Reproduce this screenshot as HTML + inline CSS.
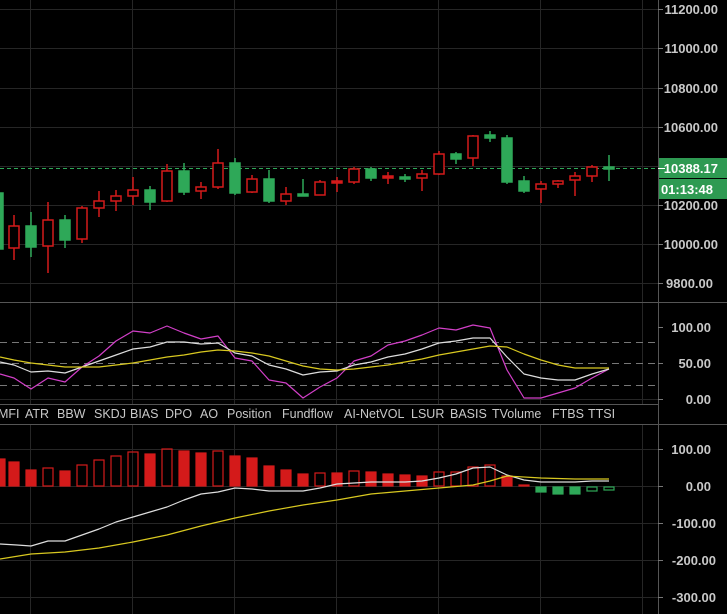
<!DOCTYPE html>
<html><head><meta charset="utf-8"><style>
html,body{margin:0;padding:0;background:#000;width:727px;height:614px;overflow:hidden}
svg{display:block}
text{font-family:"Liberation Sans",sans-serif}
</style></head><body>
<svg width="727" height="614" viewBox="0 0 727 614" xmlns="http://www.w3.org/2000/svg">
<rect width="727" height="614" fill="#000"/>
<g stroke="#262626" stroke-width="1">
<line x1="30.5" y1="0" x2="30.5" y2="614"/><line x1="132.5" y1="0" x2="132.5" y2="614"/><line x1="234.5" y1="0" x2="234.5" y2="614"/><line x1="336.5" y1="0" x2="336.5" y2="614"/><line x1="438.5" y1="0" x2="438.5" y2="614"/><line x1="540.5" y1="0" x2="540.5" y2="614"/><line x1="642.5" y1="0" x2="642.5" y2="614"/>
<line x1="0" y1="9.5" x2="658" y2="9.5"/><line x1="0" y1="48.5" x2="658" y2="48.5"/><line x1="0" y1="88.5" x2="658" y2="88.5"/><line x1="0" y1="127.5" x2="658" y2="127.5"/><line x1="0" y1="166.5" x2="658" y2="166.5"/><line x1="0" y1="205.5" x2="658" y2="205.5"/><line x1="0" y1="244.5" x2="658" y2="244.5"/><line x1="0" y1="283.5" x2="658" y2="283.5"/>
<line x1="0" y1="399.5" x2="658" y2="399.5"/>
<line x1="0" y1="449.5" x2="658" y2="449.5"/><line x1="0" y1="486.5" x2="658" y2="486.5"/><line x1="0" y1="523.5" x2="658" y2="523.5"/><line x1="0" y1="560.5" x2="658" y2="560.5"/><line x1="0" y1="597.5" x2="658" y2="597.5"/>
</g>
<rect x="0" y="405" width="658" height="19" fill="#000"/>
<g stroke="#777" stroke-width="1" stroke-dasharray="7,5">
<line x1="0" y1="342.5" x2="658" y2="342.5"/><line x1="0" y1="363.5" x2="658" y2="363.5"/><line x1="0" y1="385.5" x2="658" y2="385.5"/>
</g>
<g stroke="#555" stroke-width="1">
<line x1="0" y1="302.5" x2="727" y2="302.5"/><line x1="0" y1="424.5" x2="727" y2="424.5"/><line x1="0" y1="404.5" x2="658" y2="404.5"/><line x1="658.5" y1="0" x2="658.5" y2="614"/>
</g>
<line x1="0" y1="168.5" x2="658" y2="168.5" stroke="#2ea858" stroke-dasharray="4,3"/>
<!-- candles -->
<g stroke-width="1.5">
<g stroke="#2ea858" fill="#2ea858">
<rect x="-5" y="193" width="8" height="56"/>
<line x1="31" y1="212" x2="31" y2="257"/><rect x="26" y="226" width="10" height="21"/>
<line x1="65" y1="215" x2="65" y2="248"/><rect x="60" y="220" width="10" height="20"/>
<line x1="150" y1="186" x2="150" y2="210"/><rect x="145" y="190" width="10" height="12"/>
<line x1="184" y1="163" x2="184" y2="195"/><rect x="179" y="171" width="10" height="21"/>
<line x1="235" y1="158" x2="235" y2="195"/><rect x="230" y="163" width="10" height="30"/>
<line x1="269" y1="170" x2="269" y2="203"/><rect x="264" y="179" width="10" height="22"/>
<line x1="303" y1="179" x2="303" y2="196"/><rect x="298" y="194" width="10" height="2"/>
<line x1="371" y1="167" x2="371" y2="181"/><rect x="366" y="169" width="10" height="9"/>
<line x1="405" y1="174" x2="405" y2="182"/><rect x="400" y="177" width="10" height="2"/>
<line x1="456" y1="152" x2="456" y2="164"/><rect x="451" y="154" width="10" height="5"/>
<line x1="490" y1="131" x2="490" y2="142"/><rect x="485" y="135" width="10" height="3"/>
<line x1="507" y1="135" x2="507" y2="184"/><rect x="502" y="138" width="10" height="44"/>
<line x1="524" y1="176" x2="524" y2="193"/><rect x="519" y="181" width="10" height="10"/>
<line x1="609" y1="155" x2="609" y2="181"/><rect x="604" y="167" width="10" height="2"/>
</g>
<g stroke="#d41a1a" fill="none">
<line x1="14" y1="215" x2="14" y2="260"/><rect x="9" y="226" width="10" height="22" fill="#000"/>
<line x1="48" y1="202" x2="48" y2="273"/><rect x="43" y="220" width="10" height="26" fill="#000"/>
<line x1="82" y1="206" x2="82" y2="243"/><rect x="77" y="208" width="10" height="31" fill="#000"/>
<line x1="99" y1="191" x2="99" y2="217"/><rect x="94" y="201" width="10" height="7" fill="#000"/>
<line x1="116" y1="190" x2="116" y2="211"/><rect x="111" y="196" width="10" height="5" fill="#000"/>
<line x1="133" y1="177" x2="133" y2="205"/><rect x="128" y="190" width="10" height="6" fill="#000"/>
<line x1="167" y1="164" x2="167" y2="202"/><rect x="162" y="171" width="10" height="30" fill="#000"/>
<line x1="201" y1="182" x2="201" y2="199"/><rect x="196" y="187" width="10" height="4" fill="#000"/>
<line x1="218" y1="149" x2="218" y2="189"/><rect x="213" y="163" width="10" height="24" fill="#000"/>
<line x1="252" y1="175" x2="252" y2="193"/><rect x="247" y="179" width="10" height="13" fill="#000"/>
<line x1="286" y1="187" x2="286" y2="205"/><rect x="281" y="194" width="10" height="7" fill="#000"/>
<line x1="320" y1="180" x2="320" y2="195"/><rect x="315" y="182" width="10" height="13" fill="#000"/>
<line x1="337" y1="177" x2="337" y2="192"/><rect x="332" y="181" width="10" height="2" fill="#d41a1a"/>
<line x1="354" y1="167" x2="354" y2="184"/><rect x="349" y="169" width="10" height="13" fill="#000"/>
<line x1="388" y1="172" x2="388" y2="184"/><rect x="383" y="176" width="10" height="2" fill="#d41a1a"/>
<line x1="422" y1="170" x2="422" y2="191"/><rect x="417" y="174" width="10" height="4" fill="#000"/>
<line x1="439" y1="151" x2="439" y2="175"/><rect x="434" y="154" width="10" height="20" fill="#000"/>
<line x1="473" y1="135" x2="473" y2="166"/><rect x="468" y="136" width="10" height="22" fill="#000"/>
<line x1="541" y1="181" x2="541" y2="203"/><rect x="536" y="184" width="10" height="5" fill="#000"/>
<line x1="558" y1="180" x2="558" y2="188"/><rect x="553" y="181" width="10" height="3" fill="#000"/>
<line x1="575" y1="172" x2="575" y2="196"/><rect x="570" y="176" width="10" height="4" fill="#000"/>
<line x1="592" y1="165" x2="592" y2="182"/><rect x="587" y="167" width="10" height="9" fill="#000"/>
</g>
</g>
<!-- oscillator -->
<g fill="none" stroke-width="1.2" stroke-linejoin="round">
<polyline stroke="#d23fc8" points="0,374 14,378 31,389 48,378 65,382 82,367 99,356 116,341 133,331 150,333 167,326 184,333 201,339 218,336 235,358 252,361 269,380 286,383 303,398 320,387 337,378 354,361 371,356 388,345 405,341 422,335 439,328 456,330 473,325 490,328 507,370 524,398 541,398 558,393 575,388 592,378 609,369"/>
<polyline stroke="#ddd" points="0,362 14,365 31,372 48,371 65,373 82,367 99,361 116,355 133,349 150,347 167,342 184,342 201,344 218,343 235,353 252,356 269,365 286,369 303,375 320,372 337,371 354,365 371,362 388,357 405,354 422,349 439,343 456,341 473,338 490,338 507,357 524,374 541,378 558,380 575,380 592,374 609,369"/>
<polyline stroke="#d8c820" points="0,357 14,360 31,363 48,365 65,367 82,367 99,367 116,365 133,363 150,360 167,357 184,355 201,352 218,350 235,351 252,353 269,356 286,361 303,366 320,369 337,370 354,369 371,367 388,365 405,362 422,359 439,355 456,352 473,349 490,346 507,347 524,354 541,360 558,365 575,368 592,368 609,368"/>
</g>
<!-- macd bars -->
<g stroke="#d41a1a" stroke-width="1.2">
<g fill="#d41a1a">
<rect x="-5" y="459" width="10" height="27"/><rect x="9" y="462" width="10" height="24"/><rect x="26" y="470" width="10" height="16"/><rect x="60" y="471" width="10" height="15"/>
<rect x="145" y="454" width="10" height="32"/><rect x="179" y="451" width="10" height="35"/><rect x="196" y="453" width="10" height="33"/>
<rect x="230" y="456" width="10" height="30"/><rect x="247" y="458" width="10" height="28"/><rect x="264" y="466" width="10" height="20"/><rect x="281" y="470" width="10" height="16"/><rect x="298" y="474" width="10" height="12"/>
<rect x="332" y="473" width="10" height="13"/><rect x="366" y="472" width="10" height="14"/><rect x="383" y="474" width="10" height="12"/><rect x="400" y="475" width="10" height="11"/><rect x="417" y="476" width="10" height="10"/>
<rect x="502" y="476" width="10" height="10"/><rect x="519" y="485" width="10" height="1"/>
</g>
<g fill="none">
<rect x="43" y="468" width="10" height="18"/><rect x="77" y="465" width="10" height="21"/><rect x="94" y="460" width="10" height="26"/><rect x="111" y="456" width="10" height="30"/><rect x="128" y="452" width="10" height="34"/><rect x="162" y="449" width="10" height="37"/><rect x="213" y="451" width="10" height="35"/>
<rect x="315" y="473" width="10" height="13"/><rect x="349" y="471" width="10" height="15"/><rect x="434" y="472" width="10" height="14"/><rect x="451" y="472" width="10" height="14"/><rect x="468" y="467" width="10" height="19"/><rect x="485" y="465" width="10" height="21"/>
</g>
</g>
<g fill="#2ea858" stroke="#2ea858" stroke-width="1.2">
<rect x="536" y="487" width="10" height="5"/><rect x="553" y="487" width="10" height="7"/><rect x="570" y="487" width="10" height="7"/>
<rect x="587" y="487" width="10" height="4" fill="none"/><rect x="604" y="487" width="10" height="3" fill="none"/>
</g>
<g fill="none" stroke-width="1.2" stroke-linejoin="round">
<polyline stroke="#ddd" points="0,544 17,545 31,546 48,541 65,541 82,535 99,529 116,522 133,517 150,512 167,507 184,500 201,494 218,492 235,488 252,489 269,491 286,491 303,491 320,488 337,484 354,483 371,482 388,482 405,482 422,481 439,478 456,474 473,468 490,467 507,475 524,480 541,482 558,482 575,482 592,481 609,481"/>
<polyline stroke="#d8c820" points="0,559 31,554 65,552 99,548 133,542 167,535 201,526 235,518 269,511 303,505 337,500 371,494 405,491 439,488 473,485 490,481 507,476 541,478 575,479 609,479"/>
</g>
<!-- axis ticks -->
<g stroke="#777">
<line x1="658" y1="9.5" x2="663" y2="9.5"/><line x1="658" y1="48.5" x2="663" y2="48.5"/><line x1="658" y1="88.5" x2="663" y2="88.5"/><line x1="658" y1="127.5" x2="663" y2="127.5"/><line x1="658" y1="205.5" x2="663" y2="205.5"/><line x1="658" y1="244.5" x2="663" y2="244.5"/><line x1="658" y1="283.5" x2="663" y2="283.5"/>
<line x1="658" y1="327.5" x2="663" y2="327.5"/><line x1="658" y1="363.5" x2="663" y2="363.5"/><line x1="658" y1="399.5" x2="663" y2="399.5"/>
<line x1="658" y1="449.5" x2="663" y2="449.5"/><line x1="658" y1="486.5" x2="663" y2="486.5"/><line x1="658" y1="523.5" x2="663" y2="523.5"/><line x1="658" y1="560.5" x2="663" y2="560.5"/><line x1="658" y1="597.5" x2="663" y2="597.5"/>
</g>
<g fill="#c8c8c8" font-size="13" font-weight="bold" text-anchor="end">
<text x="718" y="14">11200.00</text><text x="718" y="53">11000.00</text><text x="718" y="93">10800.00</text><text x="718" y="132">10600.00</text><text x="718" y="210">10200.00</text><text x="718" y="249">10000.00</text><text x="713" y="288">9800.00</text>
<text x="711" y="332">100.00</text><text x="711" y="368">50.00</text><text x="711" y="404">0.00</text>
<text x="711" y="454">100.00</text><text x="711" y="491">0.00</text><text x="716" y="528">-100.00</text><text x="716" y="565">-200.00</text><text x="716" y="602">-300.00</text>
</g>
<rect x="659" y="158" width="68" height="20" fill="#2e9a52"/>
<rect x="659" y="179" width="68" height="20" fill="#2e9a52"/>
<line x1="658" y1="168.5" x2="665" y2="168.5" stroke="#fff"/>
<g fill="#fff" font-size="13" font-weight="bold" text-anchor="end">
<text x="718" y="173">10388.17</text><text x="713" y="194">01:13:48</text>
</g>
<g fill="#c8c8c8" font-size="12.5">
<text x="-2" y="418">MFI</text><text x="25" y="418">ATR</text><text x="57" y="418">BBW</text><text x="94" y="418">SKDJ</text><text x="130" y="418">BIAS</text><text x="165" y="418">DPO</text><text x="200" y="418">AO</text><text x="227" y="418">Position</text><text x="282" y="418">Fundflow</text><text x="344" y="418">AI-NetVOL</text><text x="411" y="418">LSUR</text><text x="450" y="418">BASIS</text><text x="492" y="418">TVolume</text><text x="552" y="418">FTBS</text><text x="588" y="418">TTSI</text>
</g>
</svg>
</body></html>
